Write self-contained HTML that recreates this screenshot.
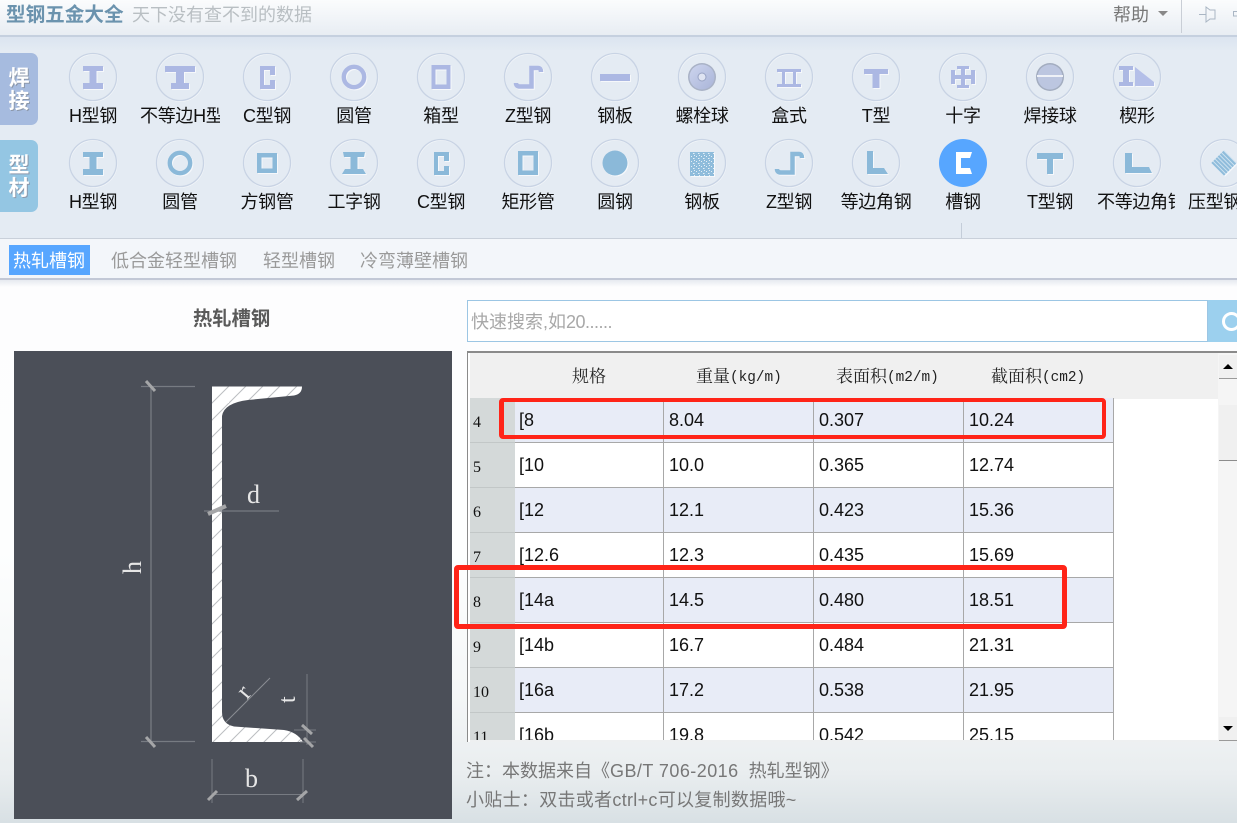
<!DOCTYPE html>
<html lang="zh"><head><meta charset="utf-8"><title>型钢五金大全</title>
<style>
*{box-sizing:border-box}
html,body{margin:0;padding:0}
body{width:1237px;height:823px;overflow:hidden;position:relative;background:#fff;font-family:"Liberation Sans","Noto Sans CJK SC",sans-serif;color:#111}
.a{position:absolute;white-space:nowrap}
.lb{position:absolute;width:80px;height:24px;line-height:24px;font-size:18px;text-align:center;white-space:nowrap;overflow:hidden;color:#111;letter-spacing:-.3px}
.tab{position:absolute;top:245px;height:30px;line-height:32px;font-size:18px;color:#9a9a9a;white-space:nowrap}
.side{position:absolute;left:0;width:38px;height:72px;border-radius:0 7px 7px 0;color:#fff;font-weight:700;font-size:21px;line-height:23px;text-align:center;padding-top:14px;text-shadow:1px 1px 0 #8c98ab}
table{border-collapse:separate;border-spacing:0;table-layout:fixed;width:644px}
td{height:45px;padding:0 0 0 5px;border-right:1px solid #a8a8a8;border-bottom:1px solid #a8a8a8;font-size:18px;color:#111;line-height:20px;white-space:nowrap;overflow:hidden}
td:first-child{background:#d4d9d9;border-right:0;border-bottom:1px solid #c2c7c7;font:16px "Liberation Serif",serif;padding-left:3px;padding-top:5px}
td:nth-child(2){padding-left:4px}
tr:nth-child(odd) td:not(:first-child){background:#e8ecf7}
.h{position:absolute;top:365px;height:24px;line-height:24px;font:17px/24px "Liberation Serif","Noto Serif CJK SC",serif;color:#222;white-space:nowrap}
.h span{font:14.4px/24px "Liberation Mono",monospace;position:relative;top:-1px}
</style></head><body>

<!-- title bar -->
<div class="a" style="left:0;top:0;width:1237px;height:35px;background:linear-gradient(#fbfcfd,#e8edf3)"></div>
<div class="a" style="left:0;top:35px;width:1237px;height:2px;background:#c5d0df"></div>
<div class="a" style="left:6px;top:1px;height:28px;line-height:28px;font-size:19.6px;font-weight:700;color:#6b93ae">型钢五金大全</div>
<div class="a" style="left:132px;top:1px;height:28px;line-height:28px;font-size:18px;color:#b9bfc3">天下没有查不到的数据</div>
<div class="a" style="left:1113px;top:1px;height:28px;line-height:28px;font-size:18px;color:#777">帮助</div>
<svg class="a" style="left:1150px;top:0" width="87" height="35">
<path d="M8 11H18L13 16Z" fill="#888"/>
<path d="M31.500 0V33" stroke="#c9ced6"/>
<path d="M49 14.500H56M56 7V22L60 19H65V10H60Z" fill="none" stroke="#aab6c4"/>
<path d="M87 11.500H83.500V16H87" fill="none" stroke="#aab6c4"/>
</svg>

<!-- toolbar -->
<div class="a" style="left:0;top:37px;width:1237px;height:201px;background:linear-gradient(#dbe4f0,#e4ebf3 14px)"></div>
<div class="a" style="left:0;top:238px;width:1237px;height:1px;background:#c9d0da"></div>
<div class="a" style="left:961px;top:223px;width:1px;height:15px;background:#c4cdd9"></div>
<div class="side" style="top:53px;background:#a6bbdf">焊<br>接</div>
<div class="side" style="top:140px;background:#94c6e3">型<br>材</div>

<svg class="a" style="left:0;top:40px" width="1237" height="180" viewBox="0 40 1237 180">
<defs>
<g id="ring"><circle r="23.500" fill="none" stroke="#f4f7fa" stroke-width="1" transform="translate(.5 .8)"/><circle r="23.500" fill="none" stroke="#c8d3e4" stroke-width="1.300"/></g>
<linearGradient id="gb" x1="0" y1="0" x2="1" y2="1"><stop offset="0" stop-color="#cdd5ee"/><stop offset="1" stop-color="#a9b4d8"/></linearGradient>
<pattern id="sp" width="5" height="5" patternUnits="userSpaceOnUse"><rect width="5" height="5" fill="#8fbcdb"/><path d="M1 1h1v1H1zM3 3h1.500v1H3zM4 0h1v1H4z" fill="#e6f0f7"/></pattern>
<pattern id="st" width="3" height="3" patternUnits="userSpaceOnUse"><rect width="3" height="3" fill="#8fbcdb"/><rect width="3" height=".8" fill="#dcebf5"/></pattern>
<path id="H" d="M-10-11H10V-6H3.500V6H10V12H-10V6H-3.500V-6H-10Z"/>
<path id="C" d="M-7-11H8V-2H3V-7H-3V8H3V3H8V12H-7Z"/>
</defs>
<!-- rings -->
<g fill="none">
<use href="#ring" x="93" y="77"/><use href="#ring" x="180" y="77"/><use href="#ring" x="267" y="77"/><use href="#ring" x="354" y="77"/><use href="#ring" x="441" y="77"/><use href="#ring" x="528" y="77"/><use href="#ring" x="615" y="77"/><use href="#ring" x="702" y="77"/><use href="#ring" x="789" y="77"/><use href="#ring" x="876" y="77"/><use href="#ring" x="963" y="77"/><use href="#ring" x="1050" y="77"/><use href="#ring" x="1137" y="77"/>
<use href="#ring" x="93" y="163"/><use href="#ring" x="180" y="163"/><use href="#ring" x="267" y="163"/><use href="#ring" x="354" y="163"/><use href="#ring" x="441" y="163"/><use href="#ring" x="528" y="163"/><use href="#ring" x="615" y="163"/><use href="#ring" x="702" y="163"/><use href="#ring" x="789" y="163"/><use href="#ring" x="876" y="163"/><use href="#ring" x="1050" y="163"/><use href="#ring" x="1137" y="163"/><use href="#ring" x="1224" y="163"/>
</g>
<!-- row 1 -->
<g fill="#acb8e3" style="filter:drop-shadow(1px 1px 0 #f6f8fb)">
<use href="#H" x="93" y="77"/>
<path transform="translate(180 77)" d="M-15-11H15V-5H4V6H9V12H-9V6H-4V-5H-15Z"/>
<use href="#C" x="267" y="77"/>
<circle cx="354" cy="77" r="10.200" fill="none" stroke="#acb8e3" stroke-width="4.400"/>
<path transform="translate(441 77)" fill-rule="evenodd" d="M-9.500-12H9.500V12H-9.500ZM-5.500-7.500V7.500H5.500V-7.500Z"/>
<path transform="translate(528 77)" d="M-12 6Q-12 9.500-8 9.500H3.500V-9H10Q13-9 13-5" fill="none" stroke="#acb8e3" stroke-width="4.500"/>
<rect x="600" y="74" width="30" height="7"/>
<path transform="translate(789 77)" d="M-12-8H12V-5H7V7H12V10H-12V7H-7V-5H-12ZM-4-5V7H4V-5Z" fill-rule="evenodd"/>
<path transform="translate(876 77)" d="M-12-8H12V-3H3.500V11H-3.500V-3H-12Z"/>
<path transform="translate(963 77)" fill-rule="evenodd" d="M-6-11H6V-8H2V-2H8V-7H12V7H8V2H2V8H6V11H-6V8H-2V2H-8V7H-12V-7H-8V-2H-2V-8H-6Z"/>
<path transform="translate(1137 77)" d="M-18-11H-4V-7H-8V5H-4V9H-18V5H-14V-7H-18Z"/>
<path transform="translate(1137 77)" d="M-2-10L17 5V9H-2Z" fill="#b4bfe8"/>
</g>
<g transform="translate(702 77)"><circle r="14" fill="#a9b2c6"/><circle r="12.500" fill="url(#gb)"/><circle r="4" fill="#dfe4f2" stroke="#98a3c4"/></g>
<g transform="translate(1050 77)"><circle r="14" fill="#a3adc0"/><circle r="12.500" fill="#bcc6e0"/><path d="M-13-1H13" stroke="#eef1f7" stroke-width="2"/></g>
<!-- row 2 -->
<g fill="#8bb9d9" style="filter:drop-shadow(1px 1px 0 #f6f8fb)">
<use href="#H" x="93" y="163"/>
<circle cx="180" cy="163" r="10.200" fill="none" stroke="#8bb9d9" stroke-width="4.400"/>
<path transform="translate(267 163)" fill-rule="evenodd" d="M-10-10H10V10H-10ZM-5.500-5.500V5.500H5.500V-5.500Z"/>
<path transform="translate(354 163)" d="M-11-11H11L10-6H3.500V6H9L12 11H-12L-9 6H-3.500V-6H-10Z"/>
<use href="#C" x="441" y="163"/>
<path transform="translate(528 163)" fill-rule="evenodd" d="M-10-12H10V12H-10ZM-5.500-7.500V7.500H5.500V-7.500Z"/>
<circle cx="615" cy="163" r="12.500"/>
<rect x="690" y="152" width="24" height="24" fill="url(#sp)"/>
<path transform="translate(789 163)" d="M-12 6Q-12 9.500-8 9.500H3.500V-9H10Q13-9 13-5" fill="none" stroke="#8bb9d9" stroke-width="4.500"/>
<path transform="translate(876 163)" d="M-9-12H-3V5H8L12 11H-9Z"/>
<path transform="translate(1050 163)" d="M-13-10H13V-4H3V11H-3V-4H-13Z"/>
<path transform="translate(1137 163)" d="M-12-10H-5V4H12L15 10H-12Z"/>
<path transform="translate(1224 163) rotate(45)" d="M-9-9H9V9H-9Z" fill="url(#st)"/>
</g>
<circle cx="963" cy="163" r="24" fill="#57a6ff"/>
<path transform="translate(963 163)" d="M-7-11H9L7-5H-2V5H7L9 11H-7Z" fill="#fff"/>
</svg>

<div class="lb" style="left:53px;top:104px">H型钢</div><div class="lb" style="left:140px;top:104px">不等边H型</div><div class="lb" style="left:227px;top:104px">C型钢</div><div class="lb" style="left:314px;top:104px">圆管</div><div class="lb" style="left:401px;top:104px">箱型</div><div class="lb" style="left:488px;top:104px">Z型钢</div><div class="lb" style="left:575px;top:104px">钢板</div><div class="lb" style="left:662px;top:104px">螺栓球</div><div class="lb" style="left:749px;top:104px">盒式</div><div class="lb" style="left:836px;top:104px">T型</div><div class="lb" style="left:923px;top:104px">十字</div><div class="lb" style="left:1010px;top:104px">焊接球</div><div class="lb" style="left:1097px;top:104px">楔形</div>
<div class="lb" style="left:53px;top:190px">H型钢</div><div class="lb" style="left:140px;top:190px">圆管</div><div class="lb" style="left:227px;top:190px">方钢管</div><div class="lb" style="left:314px;top:190px">工字钢</div><div class="lb" style="left:401px;top:190px">C型钢</div><div class="lb" style="left:488px;top:190px">矩形管</div><div class="lb" style="left:575px;top:190px">圆钢</div><div class="lb" style="left:662px;top:190px">钢板</div><div class="lb" style="left:749px;top:190px">Z型钢</div><div class="lb" style="left:836px;top:190px">等边角钢</div><div class="lb" style="left:923px;top:190px">槽钢</div><div class="lb" style="left:1010px;top:190px">T型钢</div><div class="lb" style="left:1097px;top:190px;width:78px">不等边角钢</div><div class="lb" style="left:1184px;top:190px;width:53px;text-align:left;padding-left:4px">压型钢</div>

<!-- tabs -->
<div class="a" style="left:0;top:239px;width:1237px;height:39px;background:#f3f6fa"></div>
<div class="a" style="left:0;top:278px;width:1237px;height:2px;background:#c2c8d6"></div>
<div class="tab" style="left:9px;width:81px;background:#57a6ff;color:#fff;padding-left:4px">热轧槽钢</div>
<div class="tab" style="left:111px">低合金轻型槽钢</div>
<div class="tab" style="left:263px">轻型槽钢</div>
<div class="tab" style="left:360px">冷弯薄壁槽钢</div>

<!-- main -->
<div class="a" style="left:0;top:280px;width:1237px;height:543px;background:linear-gradient(#e6eaf0,#fdfdfe 7px,#fdfefe 50%,#f5f7f8 75%,#e9edef 91%,#d8e0e4)"></div>
<div class="a" style="left:193px;top:307px;height:26px;line-height:26px;font-size:19.300px;font-weight:700;color:#5a5a5a">热轧槽钢</div>

<svg class="a" style="left:14px;top:351px" width="438" height="468" viewBox="14 351 438 468">
<defs>
<pattern id="hat" width="17" height="17" patternUnits="userSpaceOnUse" patternTransform="translate(212 386)"><rect width="17" height="17" fill="#fff"/><path d="M-2 19L19-2M-19 19L19-19" stroke="#bbbdc1" stroke-width="1"/></pattern>
</defs>
<rect x="14" y="351" width="438" height="468" fill="#4b4f58"/>
<path d="M212 386.500H302Q302 394 294 395.500L248 400Q224 403 222 416V712Q222 724 234 726.500L284 730Q297 732 303 742H212Z" fill="url(#hat)"/>
<g fill="none" stroke="#777b82" stroke-width="1">
<path d="M151 386V742M141 386.500H195M141 741.500H195" stroke-width="1.300"/>
<path d="M204 511H279" stroke-width="1.200"/>
<path d="M226 722L270 678" stroke="#8a8d93"/>
<path d="M307 674V745M294 730H316M300 742H316"/>
<path d="M212 759V803M303 759V803M212 794.500H303"/>
</g>
<g stroke="#a5a6a8" stroke-width="3" fill="none">
<path d="M146 381L155 391M146 737L155 747M302 725L312 734M304 738L313 747"/>
<path d="M208 514L226 506" stroke-width="4"/>
<path d="M208 800L217 791M297 800L307 791"/>
</g>
<g font-family="Liberation Serif,serif" fill="#e6e6e6" font-size="26">
<text x="247" y="503">d</text>
<text x="245" y="787">b</text>
<text transform="translate(141 574) rotate(-90)">h</text>
<text transform="translate(247 700) rotate(-50)" font-size="25">r</text>
<text transform="translate(295 703) rotate(-90)" font-size="24">t</text>
</g>
</svg>

<!-- search -->
<div class="a" style="left:467px;top:300px;width:741px;height:42px;background:#fff;border:1px solid #9cc6e4;font-size:18px;line-height:42px;color:#a8a8a8;padding-left:3px">快速搜索,如<span style="letter-spacing:-.5px">20......</span></div>
<div class="a" style="left:1208px;top:300px;width:29px;height:42px;background:#9cd0ee;overflow:hidden"><div style="position:absolute;left:14px;top:12px;width:19px;height:19px;border:3px solid #fff;border-radius:50%"></div></div>

<!-- table -->
<div class="a" style="left:467px;top:351px;width:770px;height:391px;background:#fff;border-top:2px solid #8a8a8a;border-left:1px solid #8a8a8a;overflow:hidden">
<div class="a" style="left:2px;top:0;width:748px;height:46px;background:#f0f0f0"></div>
<div class="a" style="left:2px;top:45px"><table>
<colgroup><col style="width:45px"><col style="width:149px"><col style="width:150px"><col style="width:150px"><col style="width:150px"></colgroup>
<tr><td>4</td><td>[8</td><td>8.04</td><td>0.307</td><td>10.24</td></tr>
<tr><td>5</td><td>[10</td><td>10.0</td><td>0.365</td><td>12.74</td></tr>
<tr><td>6</td><td>[12</td><td>12.1</td><td>0.423</td><td>15.36</td></tr>
<tr><td>7</td><td>[12.6</td><td>12.3</td><td>0.435</td><td>15.69</td></tr>
<tr><td>8</td><td>[14a</td><td>14.5</td><td>0.480</td><td>18.51</td></tr>
<tr><td>9</td><td>[14b</td><td>16.7</td><td>0.484</td><td>21.31</td></tr>
<tr><td>10</td><td>[16a</td><td>17.2</td><td>0.538</td><td>21.95</td></tr>
<tr><td>11</td><td>[16b</td><td>19.8</td><td>0.542</td><td>25.15</td></tr>
</table></div>
</div>
<div class="a" style="left:470px;top:740px;width:767px;height:2px;background:#eef0f1"></div>
<div class="h" style="left:572px">规格</div>
<div class="h" style="left:696px">重量<span>(kg/m)</span></div>
<div class="h" style="left:836px">表面积<span>(m2/m)</span></div>
<div class="h" style="left:991px">截面积<span>(cm2)</span></div>

<!-- scrollbar -->
<div class="a" style="left:1218px;top:353px;width:19px;height:387px;background:#f5f5f5"></div>
<div class="a" style="left:1219px;top:355px;width:18px;height:24px;background:#f0f0f0;border-bottom:1px solid #9a9a9a"><div style="position:absolute;left:4px;top:9px;border:5px solid transparent;border-top:0;border-bottom:5px solid #000"></div></div>
<div class="a" style="left:1219px;top:405px;width:18px;height:56px;background:#f0f0f0;border-bottom:1px solid #8c8c8c"></div>
<div class="a" style="left:1219px;top:717px;width:18px;height:24px;background:#f0f0f0;border-bottom:1px solid #9a9a9a"><div style="position:absolute;left:4px;top:9px;border:5px solid transparent;border-bottom:0;border-top:5px solid #000"></div></div>

<!-- notes -->
<div class="a" style="left:466px;top:758px;height:26px;line-height:26px;font-size:18px;color:#777">注&#xFF1A;本数据来自《<span style="letter-spacing:.45px">GB/T 706-2016</span>&nbsp; 热轧型钢》</div>
<div class="a" style="left:466px;top:787px;height:26px;line-height:26px;font-size:18px;color:#777;letter-spacing:.3px">小贴士&#xFF1A;双击或者ctrl+c可以复制数据哦~</div>

<!-- red highlights -->
<div class="a" style="left:499px;top:398px;width:607px;height:41px;border:4.500px solid #ff2418;border-left-width:5px;border-radius:4px"></div>
<div class="a" style="left:454px;top:565px;width:613px;height:64px;border:5px solid #ff2418;border-radius:4px"></div>
</body></html>
